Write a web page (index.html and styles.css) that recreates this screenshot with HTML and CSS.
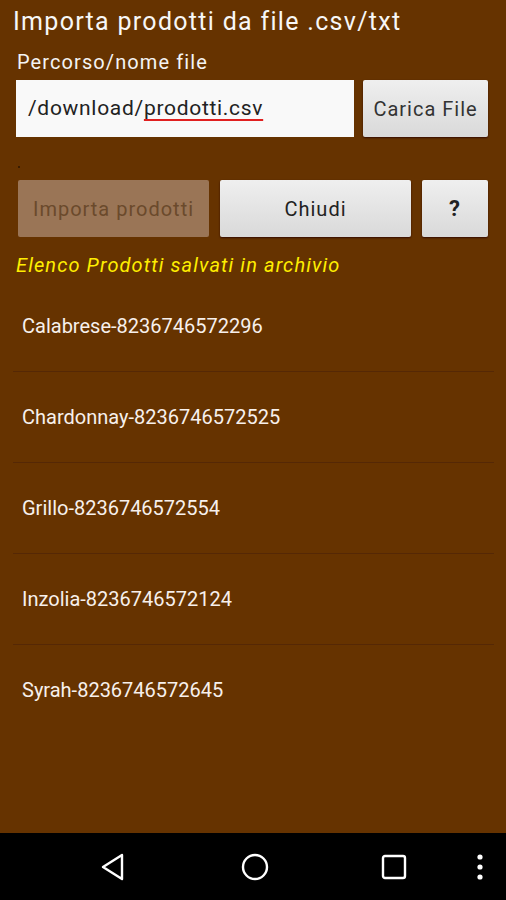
FILE: index.html
```html
<!DOCTYPE html>
<html lang="it">
<head>
  <meta charset="UTF-8">
  <meta name="viewport" content="width=device-width, initial-scale=1.0">
  <title>Importa prodotti</title>
  <link rel="stylesheet" href="styles.css">
</head>
<body>
  <div class="screen">
    <div class="content">
      <h1 class="title">Importa prodotti da file .csv/txt</h1>
      <div class="label">Percorso/nome file</div>
      <div class="file-row">
        <div class="file-input">/download/<span class="misspelled">prodotti.csv</span></div>
        <button class="btn btn-load">Carica File</button>
      </div>
      <div class="status"><span class="dot"></span></div>
      <div class="action-row">
        <button class="btn btn-disabled">Importa prodotti</button>
        <button class="btn btn-close">Chiudi</button>
        <button class="btn btn-help">?</button>
      </div>
      <div class="section-title">Elenco Prodotti salvati in archivio</div>
      <ul class="product-list">
        <li>Calabrese-8236746572296</li>
        <li>Chardonnay-8236746572525</li>
        <li>Grillo-8236746572554</li>
        <li>Inzolia-8236746572124</li>
        <li>Syrah-8236746572645</li>
      </ul>
    </div>
    <div class="navbar">
      <svg class="nav-icon" width="26" height="30" viewBox="0 0 26 30">
        <path d="M22 3 L3 15 L22 27 Z" fill="none" stroke="#fff" stroke-width="2.4" stroke-linejoin="round"/>
      </svg>
      <svg class="nav-icon" width="30" height="30" viewBox="0 0 30 30">
        <circle cx="15" cy="15" r="12" fill="none" stroke="#fff" stroke-width="2.4"/>
      </svg>
      <svg class="nav-icon" width="26" height="26" viewBox="0 0 26 26">
        <rect x="2" y="2" width="22" height="22" rx="2" fill="none" stroke="#fff" stroke-width="2.4"/>
      </svg>
      <svg class="nav-more" width="8" height="28" viewBox="0 0 8 28">
        <circle cx="4" cy="4" r="2.6" fill="#fff"/>
        <circle cx="4" cy="14" r="2.6" fill="#fff"/>
        <circle cx="4" cy="24" r="2.6" fill="#fff"/>
      </svg>
    </div>
  </div>
</body>
</html>
```

FILE: styles.css
```css
body {
  margin: 0;
  font-family: Roboto, "Liberation Sans", sans-serif;
  background: #663300;
}
.screen {
  display: flex;
  flex-direction: column;
  height: 900px;
}
.content {
  flex: 1;
}
.title {
  margin: 8px 0 0 13px;
  font-size: 25px;
  font-weight: normal;
  line-height: 28px;
  letter-spacing: 1.3px;
  color: #f7f7f7;
}
.label {
  margin: 14px 0 0 17px;
  font-size: 20px;
  line-height: 24px;
  letter-spacing: 1.1px;
  color: #f4f4f4;
}
.file-row {
  display: flex;
  gap: 9px;
  margin: 6px 0 0 16px;
}
.file-input {
  width: 326px;
  height: 57px;
  padding-left: 12px;
  background: #f9f9f9;
  font-size: 21px;
  line-height: 57px;
  letter-spacing: 0.7px;
  color: #222;
  box-sizing: content-box;
}
.misspelled {
  text-decoration: underline;
  text-decoration-color: #e02020;
  text-underline-offset: 4px;
  text-decoration-thickness: 2px;
}
.btn {
  height: 57px;
  border: none;
  border-radius: 2px;
  font-family: Roboto, "Liberation Sans", sans-serif;
  font-size: 20px;
  letter-spacing: 1px;
  color: #222;
  background: linear-gradient(#efefef, #d9d9d9);
  box-shadow: 0 1px 2px rgba(40, 0, 0, 0.8);
  padding: 0;
}
.btn-load {
  width: 125px;
  color: #333;
}
.status {
  height: 43px;
  position: relative;
}
.dot {
  position: absolute;
  left: 18px;
  top: 29px;
  width: 2px;
  height: 2px;
  background: #3a1c00;
}
.action-row {
  display: flex;
  gap: 11px;
  margin-left: 18px;
}
.btn-disabled {
  width: 191px;
  background: #9a7556;
  color: #6b4a2c;
  box-shadow: none;
}
.btn-close {
  width: 191px;
}
.btn-help {
  width: 66px;
  font-weight: bold;
  font-size: 22px;
}
.section-title {
  margin: 16px 0 0 16px;
  font-size: 20px;
  line-height: 24px;
  font-style: italic;
  letter-spacing: 1.1px;
  color: #ffee00;
}
.product-list {
  list-style: none;
  margin: 4px 12px 0 13px;
  padding: 0;
}
.product-list li {
  height: 90px;
  line-height: 90px;
  padding-left: 9px;
  font-size: 20px;
  color: #f7f0ec;
  border-bottom: 1px solid #552805;
}
.product-list li:last-child {
  border-bottom: none;
}
.navbar {
  height: 67px;
  background: #000;
  display: flex;
  align-items: center;
}
.nav-icon:nth-child(1) {
  margin-left: 100px;
}
.nav-icon:nth-child(2) {
  margin-left: 114px;
}
.nav-icon:nth-child(3) {
  margin-left: 111px;
}
.nav-more {
  margin-left: 69px;
}
```
